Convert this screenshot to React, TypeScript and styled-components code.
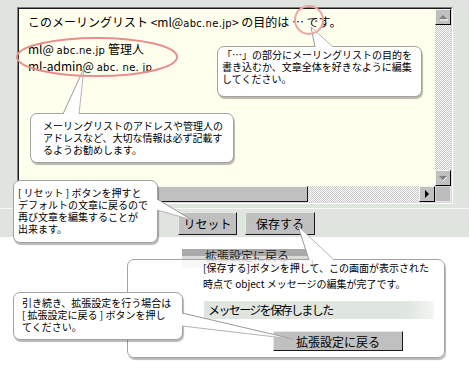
import React from 'react';
import styled, { createGlobalStyle } from 'styled-components';

const JP = `"Noto Sans CJK JP", "Noto Sans", sans-serif`;

const GlobalStyle = createGlobalStyle`
  body {
    margin: 0;
    background: #fff;
  }
  * {
    box-sizing: border-box;
  }
`;

const checker = `repeating-conic-gradient(#c4c4c4 0 25%, #ffffff 0 50%) 0 0 / 2px 2px`;

const Page = styled.div`
  position: relative;
  width: 469px;
  height: 369px;
  overflow: hidden;
  background: #fff;
  font-family: ${JP};
  color: #000;
`;

const Panel = styled.div`
  background: #dfe4df;
  height: 237px;
  padding-top: 7px;
`;

const EditorFrame = styled.div`
  margin-left: 17px;
  width: 436px;
  height: 197px;
  border: 1px solid;
  border-color: #808080 #ffffff #ffffff #808080;
`;

const EditorInner = styled.div`
  height: 100%;
  border: 1px solid;
  border-color: #1a1a1a #d8d8d8 #d8d8d8 #1a1a1a;
  display: grid;
  grid-template-columns: 1fr 16px;
  grid-template-rows: 1fr 16px;
`;

const Sheet = styled.div`
  background: #ffffee;
  padding: 5px 0 0 9px;
  font-size: 12px;
  line-height: 15px;
  white-space: nowrap;
  overflow: hidden;
`;

const SheetLine = styled.div<{ $gap?: number }>`
  margin-top: ${({ $gap }) => $gap ?? 0}px;
`;

const Domain = styled.span`
  font-family: "DejaVu Sans", sans-serif;
  font-size: 10px;
  letter-spacing: 0.3px;
`;

const VScroll = styled.div`
  display: flex;
  flex-direction: column;
  justify-content: space-between;
  background: ${checker};
`;

const HScroll = styled.div`
  display: flex;
  background: ${checker};
`;

const ArrowButton = styled.div`
  width: 16px;
  height: 16px;
  flex: none;
  background: #c0c0c0;
  border: 1px solid;
  border-color: #f4f4f4 #000 #000 #f4f4f4;
  display: flex;
  align-items: center;
  justify-content: center;
`;

const Thumb = styled.div`
  width: 273px;
  height: 16px;
  background: #c0c0c0;
  border: 1px solid;
  border-color: #f4f4f4 #1a1a1a #1a1a1a #f4f4f4;
`;

const Corner = styled.div`
  background: #bcbcbc;
  border: 1px solid;
  border-color: #d4d4d4 #e8e8e8 #e8e8e8 #d4d4d4;
`;

const ButtonRow = styled.div`
  margin-top: 4px;
  border-top: 1px solid #f6f8f6;
  padding: 3px 0 0 178px;
  display: flex;
  gap: 8px;
`;

const PushButton = styled.button<{ $w: number; $h?: number }>`
  width: ${({ $w }) => $w}px;
  height: ${({ $h }) => $h ?? 23}px;
  padding: 0;
  background: #c0c0c0;
  border: 1px solid;
  border-color: #e8e8e8 #1a1a1a #1a1a1a #e8e8e8;
  font-family: ${JP};
  font-size: 12px;
  color: #000;
`;

const Lower = styled.div`
  padding: 12px 0 0 182px;
`;

const StubButton = styled.div`
  width: 131px;
  height: 19px;
  background: linear-gradient(#a9a9a9 0 7px, #dadada 7px);
  border-right: 1px solid #333;
  font-size: 12px;
  line-height: 13px;
  text-align: center;
  color: #222;
  overflow: hidden;
`;

const Callout = styled.div<{ $x: number; $y: number; $w: number; $h: number; $pad: string; $clear?: boolean }>`
  position: absolute;
  left: ${({ $x }) => $x}px;
  top: ${({ $y }) => $y}px;
  width: ${({ $w }) => $w}px;
  height: ${({ $h }) => $h}px;
  padding: ${({ $pad }) => $pad};
  background: ${({ $clear }) => ($clear ? 'rgba(255,255,255,0.8)' : '#fff')};
  border: 1px solid #a2a2a2;
  border-radius: 7px;
  box-shadow: 1px 2px 1px rgba(0, 0, 0, 0.28);
  font-size: 10px;
  line-height: 12px;
  white-space: nowrap;
`;

const SavedText = styled.div`
  padding-left: 75px;
  line-height: 16px;
`;

const MessageBar = styled.div`
  margin: 9px 0 0 76px;
  width: 230px;
  height: 18px;
  padding-left: 4px;
  background: linear-gradient(90deg, #dfe5df 0 88%, #f4f6f4 100%);
  font-size: 12px;
  line-height: 18px;
  letter-spacing: -1.6px;
`;

const ReturnWrap = styled.div`
  margin: 12px 0 0 145px;
`;

const Overlay = styled.svg`
  position: absolute;
  left: 0;
  top: 0;
  width: 469px;
  height: 369px;
  pointer-events: none;
`;

type Tail = { apex: [number, number]; a: [number, number]; b: [number, number] };

const tails: Tail[] = [
  { apex: [311, 27], a: [315, 47], b: [333, 47] },
  { apex: [84, 68], a: [63, 114], b: [79, 114] },
  { apex: [192, 220], a: [157, 199], b: [157, 210] },
  { apex: [298, 226], a: [309, 260], b: [334, 260] },
  { apex: [293, 339], a: [182, 313], b: [182, 326] },
];

const TailShape: React.FC<{ t: Tail }> = ({ t }) => {
  const pts = [t.a, t.apex, t.b].map((p) => p.join(',')).join(' ');
  return (
    <g>
      <polygon points={pts} fill="#fff" />
      <line x1={t.a[0]} y1={t.a[1]} x2={t.apex[0]} y2={t.apex[1]} stroke="#9c9c9c" strokeWidth={1} />
      <line x1={t.b[0]} y1={t.b[1]} x2={t.apex[0]} y2={t.apex[1]} stroke="#b4b4b4" strokeWidth={1} />
    </g>
  );
};

export default function App() {
  return (
    <Page>
      <GlobalStyle />
      <Panel>
        <EditorFrame>
          <EditorInner>
            <Sheet>
              <SheetLine>
                このメーリングリスト &lt;ml@<Domain>abc.ne.jp</Domain>&gt; の目的は … です。
              </SheetLine>
              <SheetLine $gap={10}>
                ml@ <Domain>abc.ne.jp</Domain> 管理人
              </SheetLine>
              <SheetLine>
                ml-admin@ <Domain>abc. ne. jp</Domain>
              </SheetLine>
            </Sheet>
            <VScroll>
              <ArrowButton>
                <svg width="10" height="8" viewBox="0 0 10 8">
                  <polygon points="1,6 5,2 9,6" fill="#808080" />
                  <line x1="2" y1="7" x2="10" y2="7" stroke="#fff" />
                </svg>
              </ArrowButton>
              <ArrowButton>
                <svg width="10" height="8" viewBox="0 0 10 8">
                  <polygon points="1,2 9,2 5,6" fill="#808080" />
                  <line x1="5" y1="7" x2="9" y2="3" stroke="#fff" />
                </svg>
              </ArrowButton>
            </VScroll>
            <HScroll>
              <ArrowButton>
                <svg width="6" height="8" viewBox="0 0 6 8">
                  <polygon points="5,0 1,4 5,8" fill="#000" />
                </svg>
              </ArrowButton>
              <Thumb />
              <div style={{ flex: 1 }} />
              <ArrowButton>
                <svg width="6" height="8" viewBox="0 0 6 8">
                  <polygon points="1,0 5,4 1,8" fill="#000" />
                </svg>
              </ArrowButton>
            </HScroll>
            <Corner />
          </EditorInner>
        </EditorFrame>
        <ButtonRow>
          <PushButton $w={59}>リセット</PushButton>
          <PushButton $w={70}>保存する</PushButton>
        </ButtonRow>
      </Panel>
      <Lower>
        <StubButton>拡張設定に戻る</StubButton>
      </Lower>

      <Callout $x={217} $y={46} $w={205} $h={51} $pad="2px 4px">
        「…」の部分にメーリングリストの目的を
        <br />
        書き込むか、文章全体を好きなように編集
        <br />
        してください。
      </Callout>
      <Callout $x={30} $y={113} $w={204} $h={50} $pad="6px 12px">
        メーリングリストのアドレスや管理人の
        <br />
        アドレスなど、大切な情報は必ず記載す
        <br />
        るようお勧めします。
      </Callout>
      <Callout $x={127} $y={259} $w={318} $h={99} $pad="0" $clear>
        <SavedText>
          [保存する]ボタンを押して、この画面が表示された
          <br />
          時点で object メッセージの編集が完了です。
        </SavedText>
        <MessageBar>メッセージを保存しました</MessageBar>
        <ReturnWrap>
          <PushButton $w={130} $h={20}>
            拡張設定に戻る
          </PushButton>
        </ReturnWrap>
      </Callout>
      <Callout $x={13} $y={180} $w={145} $h={63} $pad="6px 4px">
        [ リセット ] ボタンを押すと
        <br />
        デフォルトの文章に戻るので
        <br />
        再び文章を編集することが
        <br />
        出来ます。
      </Callout>
      <Callout $x={13} $y={292} $w={170} $h={48} $pad="4px 8px">
        引き続き、拡張設定を行う場合は
        <br />
        [ 拡張設定に戻る ] ボタンを押し
        <br />
        てください。
      </Callout>

      <Overlay viewBox="0 0 469 369">
        {tails.map((t, i) => (
          <TailShape key={i} t={t} />
        ))}
        <ellipse cx={97} cy={57} rx={80} ry={19} fill="none" stroke="#ea8c8c" strokeWidth={2} />
        <circle cx={309} cy={20} r={14} fill="none" stroke="#f0a2a2" strokeWidth={2} />
      </Overlay>
    </Page>
  );
}
